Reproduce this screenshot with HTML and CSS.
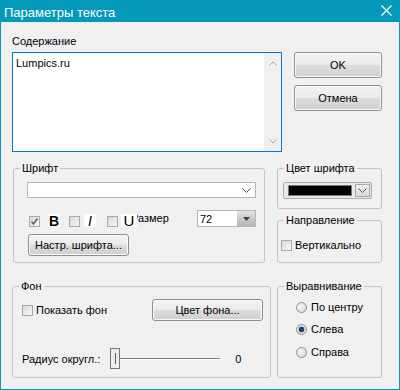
FILE: index.html
```html
<!DOCTYPE html>
<html lang="ru">
<head>
  <meta charset="UTF-8">
  <title>Параметры текста</title>
  <link rel="stylesheet" href="styles.css">
</head>
<body>

<div class="window">
  <div class="titlebar">
    <span class="title">Параметры текста</span>
    <svg class="close" width="11" height="11" viewBox="0 0 11 11">
      <path d="M0.5 0.5 L10.5 10.5 M10.5 0.5 L0.5 10.5" stroke="#fff" stroke-width="1.2" fill="none"/>
    </svg>
  </div>

  <div class="dialog">
    <div class="row-top">
      <div>
        <div class="caption">Содержание</div>
        <div class="memo">
          <div class="memo-text">Lumpics.ru</div>
          <div class="scrollbar">
            <svg width="8" height="5" viewBox="0 0 8 5"><path d="M0.5 4.5 L4 1 L7.5 4.5" stroke="#a6a6a6" fill="none"/></svg>
            <svg width="8" height="5" viewBox="0 0 8 5"><path d="M0.5 0.5 L4 4 L7.5 0.5" stroke="#a6a6a6" fill="none"/></svg>
          </div>
        </div>
      </div>
      <div class="buttons">
        <button class="btn">OK</button>
        <button class="btn">Отмена</button>
      </div>
    </div>

    <div class="row-mid">
      <fieldset class="group font-group">
        <legend>Шрифт</legend>
        <div class="group-body">
          <div class="combo">
            <svg width="9" height="5" viewBox="0 0 9 5"><path d="M0.5 0.5 L4.5 4.5 L8.5 0.5" stroke="#555" fill="none"/></svg>
          </div>
          <div class="style-row">
            <span class="check">
              <svg width="9" height="9" viewBox="0 0 9 9"><path d="M1.5 4.5 L3.5 7 L7.5 1.5" stroke="#4a5d7e" stroke-width="1.4" fill="none"/></svg>
            </span>
            <span class="style-box bold">B</span>
            <span class="check"></span>
            <span class="style-box italic">I</span>
            <span class="check"></span>
            <span class="style-box underline">U</span>
            <span class="size-label">Размер</span>
            <div class="size-combo">
              <span class="size-value">72</span>
              <span class="size-btn">
                <svg width="7" height="4" viewBox="0 0 7 4"><path d="M0 0 L7 0 L3.5 4 Z" fill="#3c3c3c"/></svg>
              </span>
            </div>
          </div>
          <button class="btn font-btn">Настр. шрифта...</button>
        </div>
      </fieldset>

      <div class="side">
        <fieldset class="group color-group">
          <legend>Цвет шрифта</legend>
          <div class="group-body">
            <div class="color-combo">
              <span class="swatch"></span>
              <span class="color-btn">
                <svg width="9" height="5" viewBox="0 0 9 5"><path d="M0.5 0.5 L4.5 4.5 L8.5 0.5" stroke="#555" fill="none"/></svg>
              </span>
            </div>
          </div>
        </fieldset>
        <fieldset class="group dir-group">
          <legend>Направление</legend>
          <div class="group-body">
            <label class="option"><span class="check"></span>Вертикально</label>
          </div>
        </fieldset>
      </div>
    </div>

    <div class="row-bottom">
      <fieldset class="group bg-group">
        <legend>Фон</legend>
        <div class="group-body">
          <div class="bg-row">
            <label class="option"><span class="check"></span>Показать фон</label>
            <button class="btn bg-btn">Цвет фона...</button>
          </div>
          <div class="radius-row">
            <span>Радиус округл.:</span>
            <div class="slider"><span class="thumb"></span></div>
            <span class="value">0</span>
          </div>
        </div>
      </fieldset>

      <fieldset class="group align-group">
        <legend>Выравнивание</legend>
        <div class="group-body">
          <label class="option radio-option"><span class="radio"></span>По центру</label>
          <label class="option radio-option"><span class="radio selected"></span>Слева</label>
          <label class="option radio-option"><span class="radio"></span>Справа</label>
        </div>
      </fieldset>
    </div>
  </div>
</div>

</body>
</html>
```

FILE: styles.css
```css
body {
  margin: 0;
  font-family: "Liberation Sans", Arial, sans-serif;
  font-size: 11px;
  color: #000;
  background: #f0f0f0;
}

.window {
  width: 400px;
  height: 390px;
  box-sizing: border-box;
  border: 1px solid #0599ba;
  border-top: none;
  background: #f0f0f0;
}

.titlebar {
  height: 22px;
  margin: 0 -1px;
  padding: 2px 8px 0 4px;
  box-sizing: border-box;
  background: #0599ba;
  color: #fff;
  display: flex;
  align-items: center;
  justify-content: space-between;
  font-size: 13px;
  line-height: 15px;
}

.close {
  margin-top: -3px;
}

.dialog {
  padding: 13px 17px 0 11px;
}

/* верхний ряд */
.row-top {
  display: grid;
  grid-template-columns: 270px 88px;
  column-gap: 12px;
}

.caption {
  line-height: 13px;
  margin-bottom: 4px;
}

.memo {
  height: 100px;
  box-sizing: border-box;
  border: 1px solid #0078d7;
  background: #fff;
  display: flex;
}

.memo-text {
  flex: 1;
  padding: 4px 3px;
  line-height: 13px;
}

.scrollbar {
  width: 17px;
  box-sizing: border-box;
  padding: 8px 0 7px;
  background: #f0f0f0;
  display: flex;
  flex-direction: column;
  justify-content: space-between;
  align-items: center;
}

.scrollbar svg {
  display: block;
}

.buttons {
  padding-top: 17px;
  display: flex;
  flex-direction: column;
  gap: 7px;
}

.btn {
  height: 26px;
  padding: 0;
  font: inherit;
  font-weight: normal;
  color: #000;
  border: 1px solid #8e8e8e;
  border-radius: 3px;
  background: linear-gradient(#f3f3f3, #ebebeb 48%, #dddddd 52%, #cfcfcf);
  box-shadow: inset 0 0 0 1px #fbfbfb;
}

/* группы */
.group {
  margin: 0;
  padding: 0;
  min-width: 0;
  box-sizing: border-box;
  border: 1px solid #c3c3c3;
  border-radius: 3px;
}

.group legend {
  margin-left: 6px;
  padding: 0 2px;
  line-height: 13px;
}

.row-mid {
  margin-top: 10px;
  padding-left: 1px;
  display: grid;
  grid-template-columns: 252px 105px;
  column-gap: 12px;
}

.font-group .group-body {
  padding: 7px 8px 6px 13px;
}

.combo {
  height: 16px;
  box-sizing: border-box;
  border: 1px solid #b5b5b5;
  background: #fff;
  display: flex;
  align-items: center;
  justify-content: flex-end;
  padding-right: 4px;
}

.combo svg {
  display: block;
}

.style-row {
  margin-top: 12px;
  height: 17px;
  display: flex;
  align-items: center;
}

.check {
  width: 11px;
  height: 11px;
  flex: none;
  box-sizing: border-box;
  border: 1px solid #a9a9a9;
  background: linear-gradient(135deg, #d8d8d8, #f8f8f8);
  display: flex;
  align-items: center;
  justify-content: center;
}

.check svg {
  display: block;
}

.style-row .check {
  align-self: flex-end;
  margin-left: 9px;
}

.style-row .check:first-child {
  margin-left: 2px;
}

.style-box {
  height: 13px;
  align-self: flex-end;
  background: #fff;
  display: flex;
  align-items: center;
  justify-content: center;
  position: relative;
  z-index: 1;
}

.bold {
  width: 12px;
  margin-left: 8px;
  font-size: 14px;
  font-weight: bold;
}

.italic {
  width: 12px;
  margin-left: 4px;
  font-size: 14px;
  font-style: italic;
}

.style-row .check:nth-child(5) {
  margin-left: 11px;
}

.underline {
  width: 16px;
  margin-left: 3px;
  font-size: 15px;
}

.size-label {
  margin-left: -6px;
  line-height: 13px;
}

.size-combo {
  margin-left: auto;
  width: 59px;
  height: 17px;
  box-sizing: border-box;
  border: 1px solid #b5b5b5;
  background: #fff;
  display: flex;
  align-items: center;
}

.size-value {
  flex: 1;
  padding-left: 2px;
}

.size-btn {
  width: 18px;
  height: 15px;
  background: linear-gradient(#e4e5e6, #c6c9cb 55%, #b4b8bb);
  display: flex;
  align-items: center;
  justify-content: center;
}

.size-btn svg {
  display: block;
}

.font-btn {
  display: block;
  margin: 7px 0 0 1px;
  width: 101px;
  height: 22px;
}

.side {
  display: flex;
  flex-direction: column;
}

.color-group .group-body {
  padding: 7px 9px 9px 5px;
}

.color-combo {
  height: 17px;
  box-sizing: border-box;
  border: 1px solid #acacac;
  border-radius: 2px;
  background: #e9e9e9;
  display: flex;
  align-items: center;
  padding: 0 1px 0 4px;
}

.swatch {
  width: 64px;
  height: 11px;
  box-sizing: border-box;
  background: #000;
  border: 1px solid #7a7a7a;
}

.color-btn {
  margin-left: auto;
  width: 15px;
  height: 13px;
  box-sizing: border-box;
  border: 1px solid #a8a8a8;
  background: linear-gradient(#f0f0f0, #dadada);
  display: flex;
  align-items: center;
  justify-content: center;
}

.color-btn svg {
  display: block;
}

.dir-group {
  flex: 1;
  margin-top: 5px;
}

.dir-group .group-body {
  padding: 12px 0 0 3px;
}

.option {
  display: flex;
  align-items: center;
  gap: 3px;
  line-height: 13px;
}

/* нижний ряд */
.row-bottom {
  margin-top: 17px;
  display: grid;
  grid-template-columns: 259px 105px;
  column-gap: 6px;
}

.bg-group .group-body {
  padding: 6px 7px 8px 9px;
}

.bg-row {
  height: 22px;
  display: flex;
  align-items: center;
  justify-content: space-between;
}

.bg-btn {
  width: 111px;
  height: 22px;
}

.radius-row {
  margin-top: 27px;
  height: 21px;
  display: flex;
  align-items: center;
}

.slider {
  margin-left: 10px;
  width: 110px;
  height: 21px;
  background: linear-gradient(transparent 10px, #7c7c7c 10px, #7c7c7c 11px, #fff 11px, #fff 12px, transparent 12px);
}

.thumb {
  display: block;
  width: 10px;
  height: 21px;
  box-sizing: border-box;
  border: 1px solid #767676;
  background: linear-gradient(90deg, #ececec 4px, #5a5a5a 4px, #5a5a5a 5px, #ececec 5px);
  background-size: 100% 11px;
  background-position: 0 4px;
  background-repeat: no-repeat;
  background-color: #ececec;
}

.value {
  margin-left: 15px;
}

.align-group .group-body {
  padding: 7px 0 0 18px;
}

.radio-option {
  height: 14px;
  gap: 4px;
}

.radio-option + .radio-option {
  margin-top: 8px;
}

.radio-option:last-child {
  margin-top: 9px;
}

.radio {
  width: 11px;
  height: 11px;
  flex: none;
  box-sizing: border-box;
  border: 1px solid #8f8f8f;
  border-radius: 50%;
  background: radial-gradient(circle at 40% 40%, #f6f6f6, #d2d2d2);
}

.radio.selected {
  background: radial-gradient(circle, #2b4a86 0, #1d3566 2px, #5a72a0 2.8px, #e6e6e6 3.2px, #d2d2d2);
}
```
